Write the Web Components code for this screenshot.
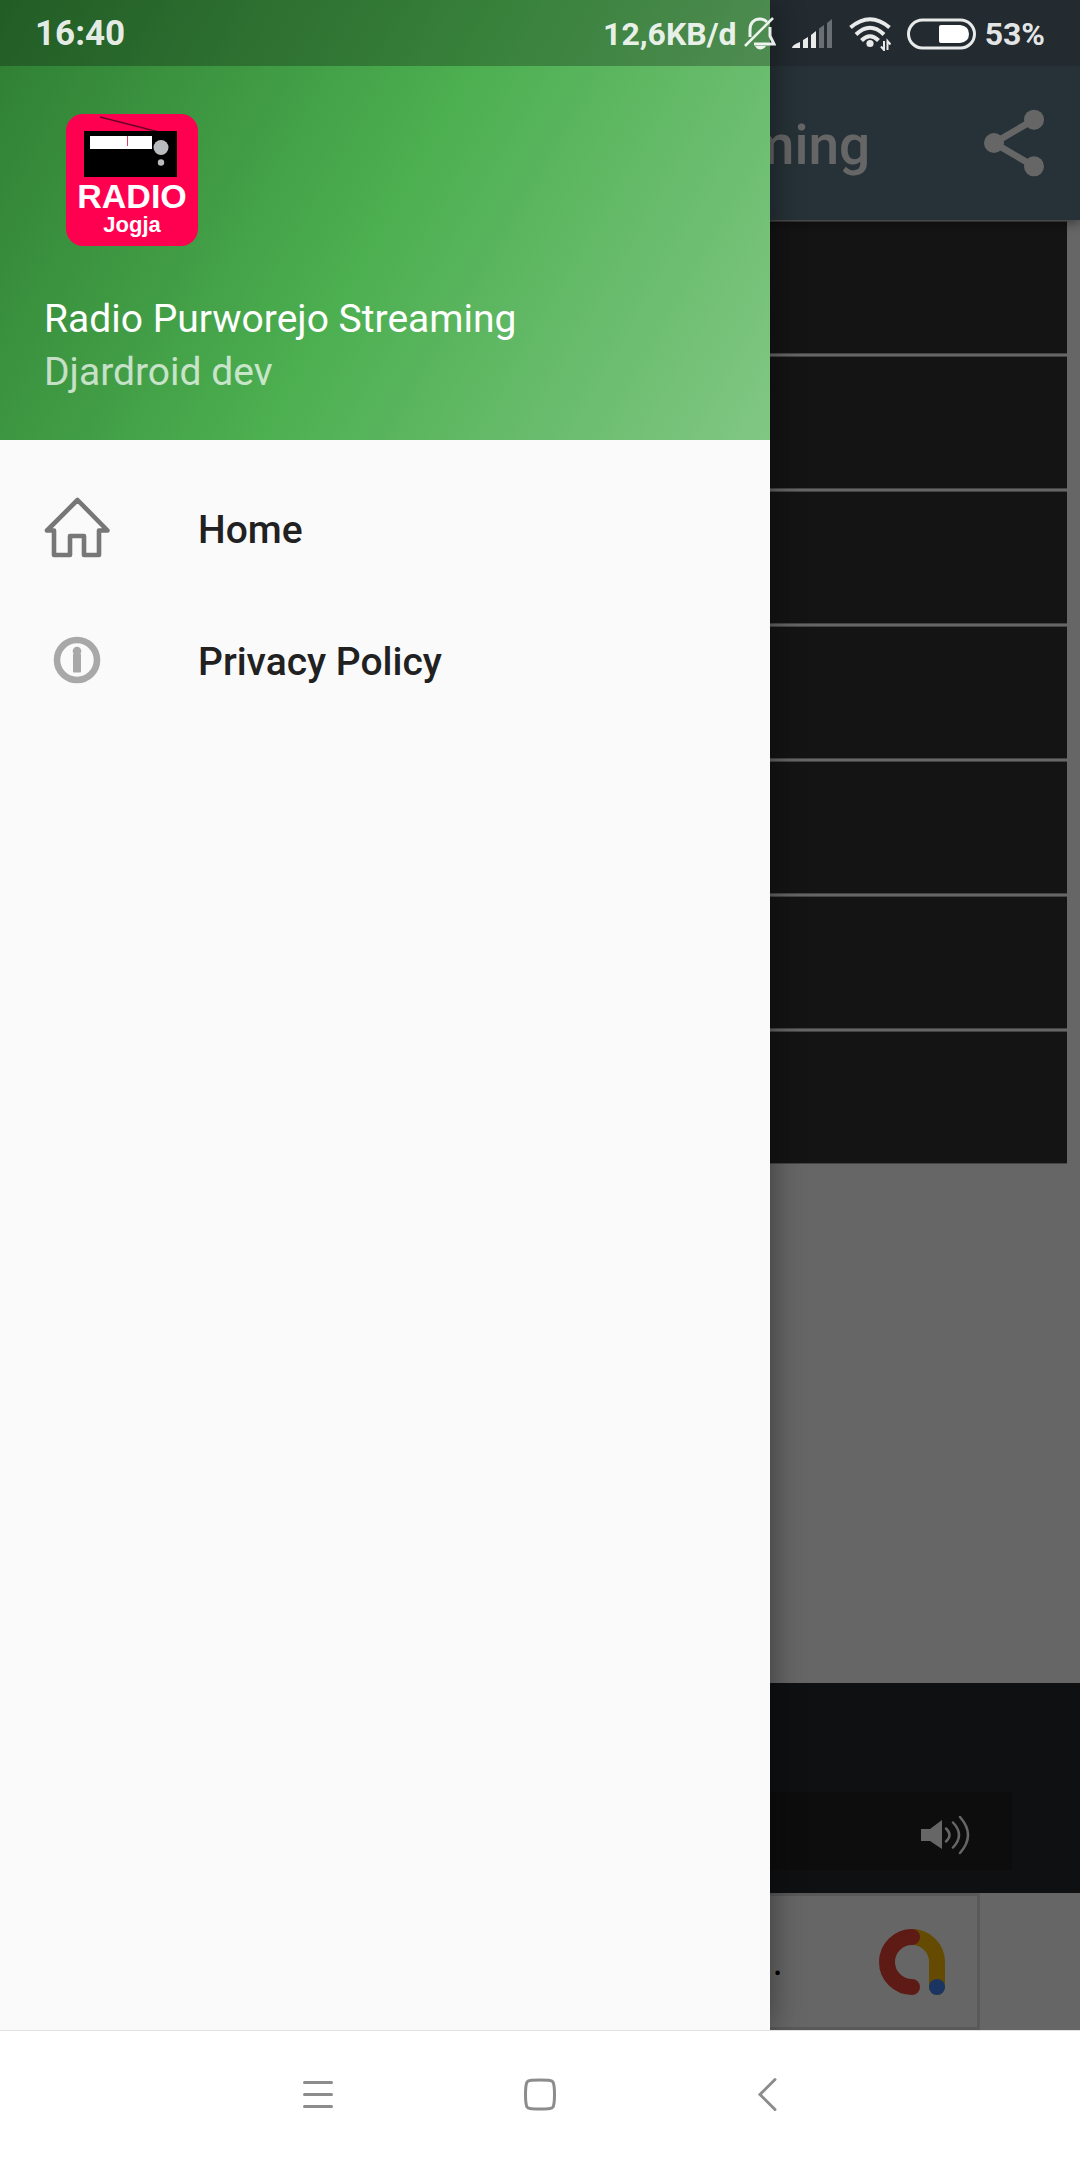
<!DOCTYPE html>
<html lang="id">
<head>
<meta charset="utf-8">
<meta name="viewport" content="width=device-width, initial-scale=1">
<title>Radio Purworejo Streaming</title>
<style>
  html, body { margin: 0; }
  body { font-family: Roboto, sans-serif; background: #fff; }
</style>
</head>
<body>
<radio-app></radio-app>

<script>
const define = (name, css, html) => {
  const template = document.createElement('template');
  template.innerHTML = `<style>*{box-sizing:border-box}button{border:0;padding:0;background:none;color:inherit;font:inherit;display:flex}svg{display:block}${css}</style>${html}`;
  customElements.define(name, class extends HTMLElement {
    constructor() {
      super();
      this.attachShadow({ mode: 'open' }).append(template.content.cloneNode(true));
    }
  });
};

define('status-bar', `
  :host { display: flex; align-items: center; height: 68px; padding: 0 35px; color: rgba(255,255,255,.9);
    font-size: 35px; line-height: 40px; font-weight: 700; }
  .time { flex: 1; }
  .icons { display: flex; align-items: center; gap: 16px; font-size: 32px; }
  .pair { display: flex; align-items: center; gap: 8px; }
  .alerts { gap: 6px; }
`, `
  <span class="time">16:40</span>
  <div class="icons">
    <div class="pair alerts">
      <span>12,6KB/d</span>
      <svg width="33" height="34" viewBox="0 0 33 34" fill="none" stroke="currentColor" stroke-width="3">
        <path d="M7 20V13C7 6 11 2 17 2C20 2 22 3 24 5M27 10V19L31 27H11"/>
        <path d="M2 29L30 1" stroke-width="2.6"/>
        <path d="M12 29H23Q21 32.500 17.500 32.500Q14 32.500 12 29Z" fill="currentColor" stroke="none"/>
      </svg>
    </div>
    <svg width="41" height="30" viewBox="0 0 41 30" fill="currentColor">
      <path d="M0 29Q0 26 8 23V29ZM11 21L16 18V29H11ZM19 16L24 12V29H19Z"/>
      <path d="M27 9.500L32 6V29H27ZM35 4L40 0V29H35Z" opacity=".35"/>
    </svg>
    <svg width="42" height="34" viewBox="0 0 42 34" fill="none" stroke="currentColor">
      <path d="M1.500 10.500Q21-6 40.500 10.500" stroke-width="4"/>
      <path d="M7 17.500Q21 4 35 17.500" stroke-width="4"/>
      <path d="M12.500 23.500Q21 15 29.500 23.500" stroke-width="4"/>
      <circle cx="21" cy="26.500" r="3.600" fill="currentColor" stroke="none"/>
      <path d="M35 24V33L32 29.500M38.500 33V24L41.500 27.500" stroke-width="2"/>
    </svg>
    <div class="pair">
      <svg width="70" height="32" viewBox="0 0 70 32">
        <rect x="1.500" y="2" width="66" height="28" rx="14" fill="none" stroke="currentColor" stroke-width="3"/>
        <path d="M34 7H53Q62 8 62 16Q62 24 53 25H34Q32 25 32 23V9Q32 7 34 7Z" fill="#fff"/>
      </svg>
      <span>53%</span>
    </div>
  </div>
`);

define('app-toolbar', `
  :host { display: block; position: relative; background: #607d8b; color: #fff; box-shadow: 0 2px 12px rgba(0,0,0,.5); }
  .inset { height: 66px; background: #586d78; }
  header { display: flex; align-items: center; justify-content: space-between; height: 154px; padding: 0 26px 0 198px; }
  h1 { margin: 0; padding-top: 4px; font-size: 55px; line-height: 64px; font-weight: 500; white-space: nowrap; }
`, `
  <div class="inset"></div>
  <header>
    <h1><slot></slot></h1>
    <button aria-label="Share">
      <svg width="80" height="80" viewBox="0 0 24 24" fill="currentColor">
        <path d="M18 5L6 12L18 19" fill="none" stroke="currentColor" stroke-width="2"/>
        <circle cx="18" cy="5" r="3"/><circle cx="6" cy="12" r="3"/><circle cx="18" cy="19" r="3"/>
      </svg>
    </button>
  </header>
`);

define('station-list', `
  :host { display: flex; flex-direction: column; gap: 4px; margin: 0 13px; padding-top: 2px; }
  div { height: 131px; background: #333; box-shadow: 0 1px #aaa, 0 -1px #aaa; }
`, `<div></div><div></div><div></div><div></div><div></div><div></div><div></div>`);

define('player-bar', `
  :host { display: block; padding: 109px 68px 23px; background: #23282b; }
  .panel { display: flex; align-items: center; justify-content: flex-end; height: 78px; padding: 8px 42px 0; background: #212121; color: #fff; }
`, `
  <div class="panel">
    <button aria-label="Volume">
      <svg width="50" height="40" viewBox="0 0 50 40">
        <path d="M1 14H10L22 5V34L10 26H1Z" fill="currentColor"/>
        <path d="M26 13.500Q33 20 26 26.500M33 7.500Q45 20 33 32.500M40 2Q56 20 40 38" fill="none" stroke="currentColor" stroke-width="2.500" stroke-linecap="round"/>
      </svg>
    </button>
  </div>
`);

define('ad-banner', `
  :host { display: flex; justify-content: center; background: #fff; }
  .ad { display: flex; align-items: center; justify-content: flex-end; gap: 96px; width: 880px; height: 137px;
    padding-right: 32px; border: 3px solid #dedede; color: #000; font-size: 40px; line-height: 48px; }
`, `
  <div class="ad">
    <span>.</span>
    <svg width="66" height="66" viewBox="0 0 66 66" fill="none" stroke-width="16" stroke-linecap="round">
      <path d="M33 8A25 25 0 0 1 58 33V58" stroke="#fbbc04"/>
      <path d="M33 8A25 25 0 0 0 33 58" stroke="#ea4335"/>
      <circle cx="58" cy="58" r="8" fill="#4285f4"/>
    </svg>
  </div>
`);

define('radio-logo', `
  :host { display: block; width: 132px; height: 132px; }
  text { font-family: "Liberation Sans", sans-serif; font-weight: 700; fill: #fff; text-anchor: middle; }
`, `
  <svg width="132" height="132" viewBox="0 0 132 132">
    <rect width="132" height="132" rx="17" fill="#ff0050"/>
    <path d="M34 3L93 18" stroke="#6a0028" stroke-width="1.500"/>
    <rect x="18" y="17" width="93" height="46" fill="#000"/>
    <rect x="24" y="22" width="62" height="13" fill="#fff"/>
    <path d="M61.500 22V32" stroke="#e04060"/>
    <circle cx="95" cy="33.500" r="7.500" fill="#b9bbbe"/><circle cx="95" cy="48.500" r="3.200" fill="#b9bbbe"/>
    <text x="66" y="94" font-size="34">RADIO</text>
    <text x="66" y="118" font-size="22">Jogja</text>
  </svg>
`);

define('drawer-header', `
  :host { display: block; background: linear-gradient(120deg, #2e7d32, #4caf50 50%, #81c784); color: #fff; }
  .inset { height: 66px; background: rgba(0,0,0,.26); }
  .body { padding: 48px 44px 41px; font-size: 39px; }
  radio-logo { margin: 0 22px 47px; }
  p { margin: 0; line-height: 53px; }
  .sub { opacity: .7; }
`, `
  <div class="inset"></div>
  <div class="body">
    <radio-logo></radio-logo>
    <p><slot></slot></p>
    <p class="sub"><slot name="sub"></slot></p>
  </div>
`);

define('drawer-item', `
  :host { display: block; }
  a { display: flex; align-items: center; gap: 88px; height: 132px; padding: 0 44px; color: #212121; text-decoration: none;
    font-size: 39px; line-height: 48px; font-weight: 500; }
  .label { padding-top: 4px; }
`, `<a href="#"><slot name="icon"></slot><span class="label"><slot></slot></span></a>`);

define('nav-drawer', `
  :host { display: block; background: #fafafa; box-shadow: 0 0 32px rgba(0,0,0,.45); }
  nav { padding: 22px 0; }
`, `
  <drawer-header>Radio Purworejo Streaming<span slot="sub">Djardroid dev</span></drawer-header>
  <nav>
    <drawer-item>
      <svg slot="icon" width="66" height="66" viewBox="0 0 66 66" fill="none" stroke="#777" stroke-width="4.600" stroke-linejoin="round">
        <path d="M33.500 5L3 35.500H10V60H26V41H40V60H55V35.500H63.500Z"/>
      </svg>Home
    </drawer-item>
    <drawer-item>
      <svg slot="icon" width="66" height="66" viewBox="0 0 66 66" fill="#a8a8a8">
        <circle cx="33" cy="33" r="20" fill="none" stroke="#a8a8a8" stroke-width="6.600"/>
        <circle cx="33" cy="24" r="4.300"/><rect x="29" y="26.500" width="8" height="19" rx="1"/>
      </svg>Privacy Policy
    </drawer-item>
  </nav>
`);

define('system-nav', `
  :host { display: flex; justify-content: center; height: 130px; padding-bottom: 4px; box-sizing: border-box; background: #fff; border-top: 1px solid #e2e2e2; color: #8c8c8c; }
  button { width: 222px; align-items: center; justify-content: center; }
  svg { fill: none; stroke: currentColor; stroke-width: 3; stroke-linecap: round; }
`, `
  <button aria-label="Menu"><svg width="48" height="48" viewBox="0 0 48 48"><path d="M10.500 12.500H37.500M10.500 24.500H37.500M10.500 36.500H37.500"/></svg></button>
  <button aria-label="Home"><svg width="48" height="48" viewBox="0 0 48 48"><path d="M24 10C34 10 36 10.500 37 12C38 14 38.500 17 38.500 24.500C38.500 32 38 35 37 37C36 38.500 34 39 24 39C14 39 12 38.500 11 37C10 35 9.500 32 9.500 24.500C9.500 17 10 14 11 12C12 10.500 14 10 24 10Z"/></svg></button>
  <button aria-label="Back"><svg width="48" height="48" viewBox="0 0 48 48"><path d="M37 9.500L22 24.500L37 39.500"/></svg></button>
`);

define('radio-app', `
  :host { display: flex; flex-direction: column; min-height: 100vh; }
  .stage { position: relative; flex: 1; display: flex; flex-direction: column; background: #fff; overflow: hidden; }
  station-list { flex: 1; }
  .scrim { position: absolute; inset: 0; background: rgba(0,0,0,.6); }
  nav-drawer { position: absolute; inset: 0 auto 0 0; width: 770px; }
  status-bar { position: absolute; inset: 0 0 auto 0; }
`, `
  <div class="stage">
    <app-toolbar>Radio Purworejo Streaming</app-toolbar>
    <station-list></station-list>
    <player-bar></player-bar>
    <ad-banner></ad-banner>
    <div class="scrim"></div>
    <nav-drawer></nav-drawer>
    <status-bar></status-bar>
  </div>
  <system-nav></system-nav>
`);
</script>
</body>
</html>
